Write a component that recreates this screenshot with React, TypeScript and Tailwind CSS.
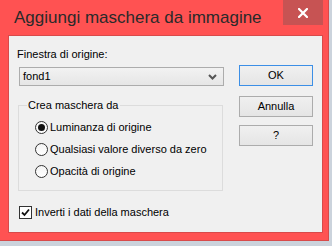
import React from 'react';

const UI_FONT = "font-['Liberation_Sans',Arial,sans-serif]";

function Radio({ checked, label }: { checked?: boolean; label: string }) {
  return (
    <div className="flex items-center h-[22px]">
      <span className="w-[13px] h-[13px] rounded-full border border-[#333] bg-gradient-to-b from-[#f4f4f4] to-white flex items-center justify-center">
        {checked && <span className="w-[7px] h-[7px] rounded-full bg-[#111]" />}
      </span>
      <span className="ml-[2px] text-[11px] text-black leading-none">{label}</span>
    </div>
  );
}

function Button({ children, focused }: { children: React.ReactNode; focused?: boolean }) {
  return (
    <div
      className={`w-[74px] h-[21px] flex items-center justify-center text-[11px] text-black bg-gradient-to-b from-[#f0f0f0] to-[#e5e5e5] border ${
        focused ? 'border-[#3c8fe6]' : 'border-[#acacac]'
      }`}
    >
      {children}
    </div>
  );
}

export default function App() {
  return (
    <div className={`w-[332px] h-[246px] bg-[#cbd3dc] overflow-hidden ${UI_FONT}`}>
      <div className="w-[329px] h-[241px] bg-[#ff5252] border-r border-b border-[#d84a4a] flex flex-col">
        {/* Title bar */}
        <div className="h-[35px] flex items-start">
          <div className="pl-[14px] pt-[8px] text-[17px] leading-[20px] text-[#2a2a2a]">
            Aggiungi maschera da immagine
          </div>
          <div className="ml-auto mr-[5px] w-[40px] h-[25px] bg-[#c75353] flex items-center justify-center">
            <svg width="10" height="10" viewBox="0 0 10 10">
              <path d="M1 1 L9 9 M9 1 L1 9" stroke="white" strokeWidth="2.2" strokeLinecap="square" />
            </svg>
          </div>
        </div>

        {/* Client area */}
        <div className="ml-[8px] w-[315px] h-[198px] bg-[#f0f0f0] border border-[#d84a4a] flex">
          <div className="pl-[10px] w-[216px] flex flex-col">
            <div className="mt-[11px] ml-[-2px] h-[15px] text-[11px] leading-[15px] text-black">Finestra di origine:</div>
            <div className="mt-[5px] h-[19px] w-[205px] border border-[#acacac] bg-gradient-to-b from-[#f2f2f2] to-[#e6e6e6] flex items-center pl-[3px] pr-[6px]">
              <span className="text-[11px] text-black leading-none">fond1</span>
              <svg className="ml-auto" width="9" height="6" viewBox="0 0 9 6">
                <path d="M1 1 L4.5 4.5 L8 1" fill="none" stroke="#555" strokeWidth="2" />
              </svg>
            </div>

            {/* Group box */}
            <div className="relative mt-[19px] ml-[-1px] w-[205px] h-[86px] border border-[#dcdcdc] pl-[16px] pt-[10px]">
              <span className="absolute left-[8px] top-[-8px] px-[1px] bg-[#f0f0f0] text-[11px] leading-[15px] text-black">
                Crea maschera da
              </span>
              <Radio checked label="Luminanza di origine" />
              <Radio label="Qualsiasi valore diverso da zero" />
              <Radio label="Opacità di origine" />
            </div>

            <div className="mt-[15px] flex items-center">
              <span className="w-[13px] h-[13px] border border-[#333] bg-white flex items-center justify-center">
                <svg width="9" height="9" viewBox="0 0 9 9">
                  <path d="M1 4.5 L3.5 7 L8 1.5" fill="none" stroke="#111" strokeWidth="1.8" />
                </svg>
              </span>
              <span className="ml-[3px] text-[11px] leading-none text-black">Inverti i dati della maschera</span>
            </div>
          </div>

          <div className="ml-[14px] pt-[29px] flex flex-col">
            <Button focused>OK</Button>
            <div className="mt-[10px]">
              <Button>Annulla</Button>
            </div>
            <div className="mt-[8px]">
              <Button>?</Button>
            </div>
          </div>
        </div>
      </div>
    </div>
  );
}
